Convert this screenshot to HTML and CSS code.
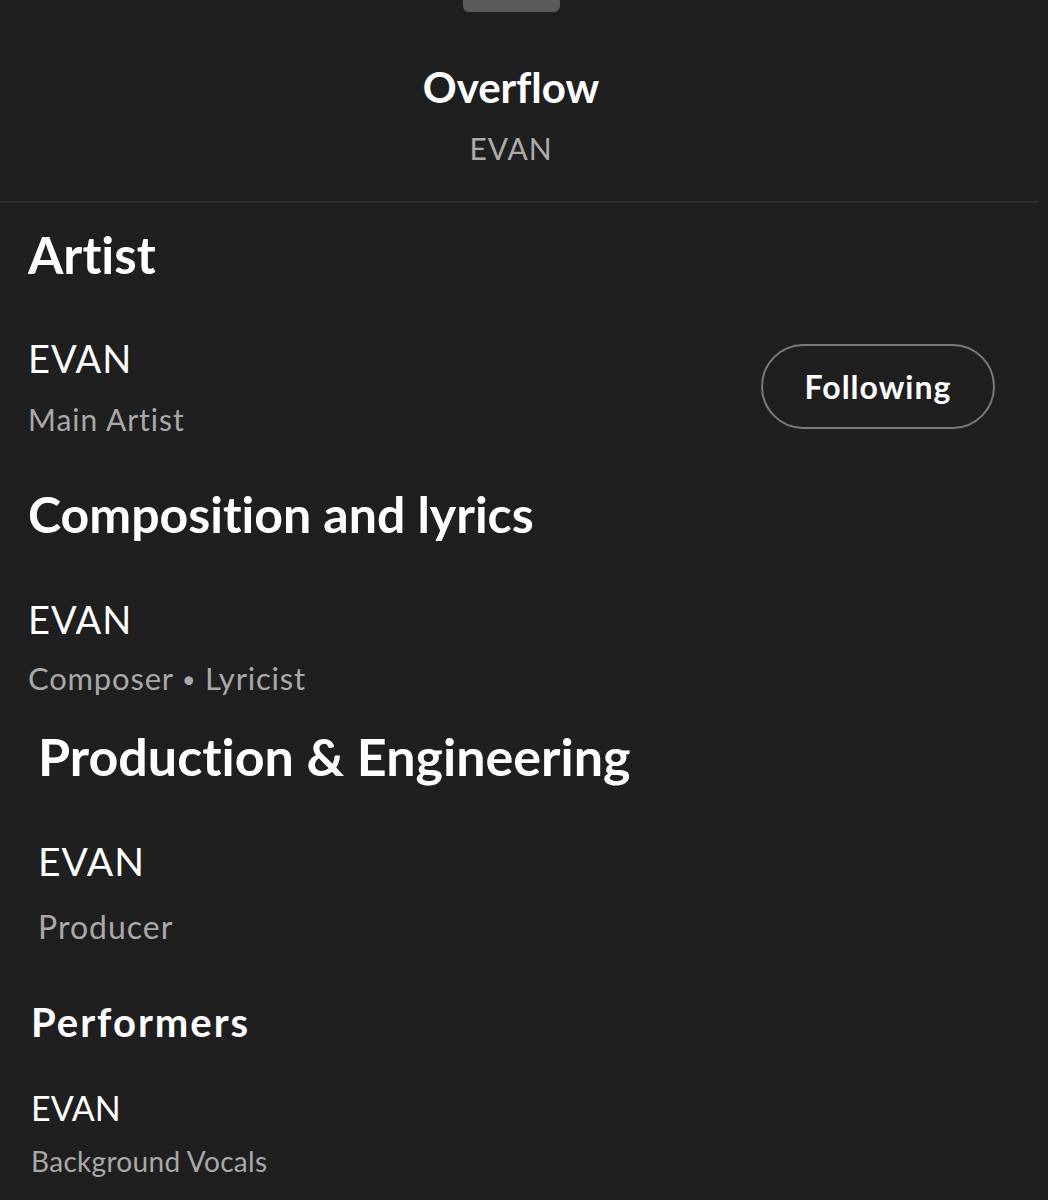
FILE: index.html
```html
<!DOCTYPE html>
<html lang="en">
<head>
  <meta charset="UTF-8">
  <meta name="viewport" content="width=device-width, initial-scale=1.0">
  <title>Credits - Overflow</title>
  <link rel="stylesheet" href="styles.css">
</head>
<body>

  <div class="sheet">

    <div class="header">
      <div class="handle"></div>
      <div class="track-title">Overflow</div>
      <div class="track-artist">EVAN</div>
    </div>

    <div class="section section-artist">
      <h2>Artist</h2>
      <div class="credit">
        <div class="credit-info">
          <div class="name">EVAN</div>
          <div class="role">Main Artist</div>
        </div>
        <button class="follow-btn">Following</button>
      </div>
    </div>

    <div class="section section-writing">
      <h2>Composition and lyrics</h2>
      <div class="credit">
        <div class="credit-info">
          <div class="name">EVAN</div>
          <div class="role">Composer <span class="dot">•</span> Lyricist</div>
        </div>
      </div>
    </div>

    <div class="section section-production">
      <h2>Production &amp; Engineering</h2>
      <div class="credit">
        <div class="credit-info">
          <div class="name">EVAN</div>
          <div class="role">Producer</div>
        </div>
      </div>
    </div>

    <div class="section section-performers">
      <h2>Performers</h2>
      <div class="credit">
        <div class="credit-info">
          <div class="name">EVAN</div>
          <div class="role">Background Vocals</div>
        </div>
      </div>
    </div>

  </div>

</body>
</html>
```

FILE: styles.css
```css
body {
  margin: 0;
  background-color: #1f1f1f;
  font-family: Lato, "Noto Sans", sans-serif;
  font-variant-ligatures: no-common-ligatures;
  color: #ffffff;
}
.sheet {
  min-height: 1200px;
}
.header {
  text-align: center;
  margin-right: 10px;
  padding-right: 16px;
  padding-bottom: 38px;
  border-bottom: 2px solid #2c2c2c;
}
.handle {
  width: 97px;
  height: 12px;
  margin: 0 auto 54px;
  background-color: #5a5a5a;
  border-radius: 0 0 6px 6px;
}
.track-title {
  font-size: 42px;
  font-weight: 700;
  line-height: 1;
}
.track-artist {
  font-size: 30px;
  letter-spacing: 1px;
  color: #acacac;
  line-height: 1;
  margin-top: 25px;
}
.section {
  padding-left: 28px;
  padding-right: 53px;
}
.section h2 {
  margin: 0;
  font-weight: 700;
  line-height: 1;
}
.credit {
  display: flex;
  justify-content: space-between;
  align-items: center;
}
.name {
  line-height: 1;
  letter-spacing: 1px;
}
.role {
  color: #a9a9a9;
  line-height: 1;
}
.role .dot {
  font-size: 0.75em;
  vertical-align: 0.1em;
}
.follow-btn {
  width: 234px;
  height: 85px;
  border: 2px solid #7a7a7a;
  border-radius: 43px;
  background: transparent;
  color: #ffffff;
  font-family: inherit;
  font-size: 32px;
  font-weight: 700;
  letter-spacing: 1px;
}

/* per-section sizes, the sheet is not evenly scaled */
.section-artist {
  padding-top: 26px;
}
.section-artist h2 {
  font-size: 51px;
}
.section-artist .credit {
  margin-top: 59px;
}
.section-artist .name {
  font-size: 38px;
}
.section-artist .role {
  font-size: 30px;
  letter-spacing: 1px;
  margin-top: 27px;
}

.section-writing {
  padding-top: 55px;
}
.section-writing h2 {
  font-size: 50px;
}
.section-writing .credit {
  margin-top: 61px;
}
.section-writing .name {
  font-size: 38px;
}
.section-writing .role {
  font-size: 31px;
  letter-spacing: 0.8px;
  margin-top: 25px;
}

.section-production {
  padding-top: 36px;
  padding-left: 38px;
}
.section-production h2 {
  font-size: 52px;
}
.section-production .credit {
  margin-top: 60px;
}
.section-production .name {
  font-size: 39px;
}
.section-production .role {
  font-size: 32px;
  letter-spacing: 1px;
  margin-top: 30px;
}

.section-performers {
  padding-top: 59px;
  padding-left: 31px;
}
.section-performers h2 {
  font-size: 40px;
  letter-spacing: 2px;
}
.section-performers .credit {
  margin-top: 49px;
}
.section-performers .name {
  font-size: 34px;
  letter-spacing: 0;
}
.section-performers .role {
  font-size: 28px;
  letter-spacing: 0.3px;
  margin-top: 22px;
}
```
